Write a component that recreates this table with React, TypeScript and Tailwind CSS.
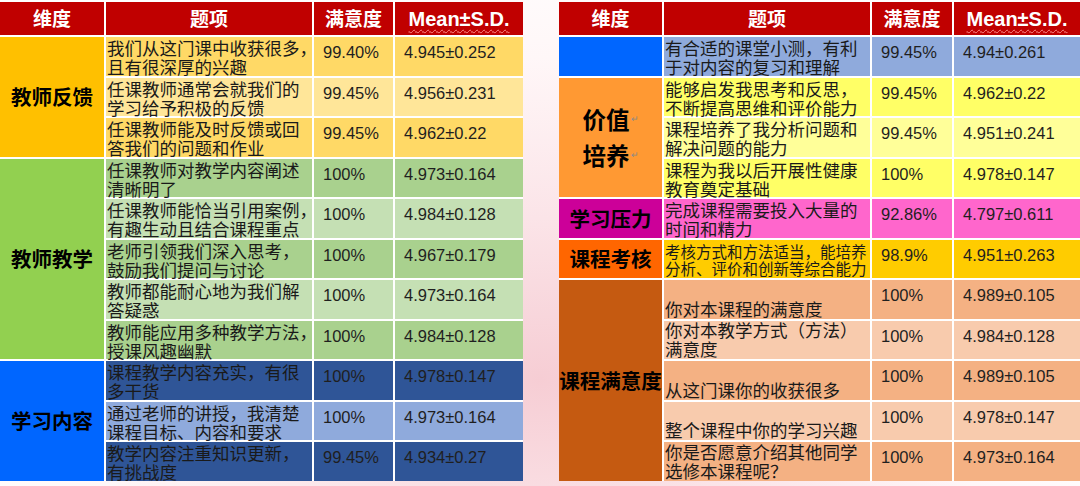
import type { ReactNode } from "react";

type Row = {
  lines: string[];
  pct: string;
  mean: string;
  bg: string;
  small?: boolean;
  bottom?: boolean;
};

type Group = {
  label: ReactNode;
  labelClass: string;
  rows: Row[];
};

const CJK = "font-['Noto_Sans_CJK_SC',sans-serif]";
const NUM = "font-['Liberation_Sans','Noto_Sans_CJK_SC',sans-serif]";

const leftGroups: Group[] = [
  {
    label: "教师反馈",
    labelClass: "row-span-3 bg-[#FFC000]",
    rows: [
      { lines: ["我们从这门课中收获很多，", "且有很深厚的兴趣"], pct: "99.40%", mean: "4.945±0.252", bg: "bg-[#FFD966]" },
      { lines: ["任课教师通常会就我们的", "学习给予积极的反馈"], pct: "99.45%", mean: "4.956±0.231", bg: "bg-[#FFE699]" },
      { lines: ["任课教师能及时反馈或回", "答我们的问题和作业"], pct: "99.45%", mean: "4.962±0.22", bg: "bg-[#FFD966]" },
    ],
  },
  {
    label: "教师教学",
    labelClass: "row-span-5 bg-[#92D050]",
    rows: [
      { lines: ["任课教师对教学内容阐述", "清晰明了"], pct: "100%", mean: "4.973±0.164", bg: "bg-[#A9D18E]" },
      { lines: ["任课教师能恰当引用案例，", "有趣生动且结合课程重点"], pct: "100%", mean: "4.984±0.128", bg: "bg-[#C5E0B4]" },
      { lines: ["老师引领我们深入思考，", "鼓励我们提问与讨论"], pct: "100%", mean: "4.967±0.179", bg: "bg-[#A9D18E]" },
      { lines: ["教师都能耐心地为我们解", "答疑惑"], pct: "100%", mean: "4.973±0.164", bg: "bg-[#C5E0B4]" },
      { lines: ["教师能应用多种教学方法，", "授课风趣幽默"], pct: "100%", mean: "4.984±0.128", bg: "bg-[#A9D18E]" },
    ],
  },
  {
    label: "学习内容",
    labelClass: "row-span-3 bg-[#0066FF]",
    rows: [
      { lines: ["课程教学内容充实，有很", "多干货"], pct: "100%", mean: "4.978±0.147", bg: "bg-[#2F5597]" },
      { lines: ["通过老师的讲授，我清楚", "课程目标、内容和要求"], pct: "100%", mean: "4.973±0.164", bg: "bg-[#8FAADC]" },
      { lines: ["教学内容注重知识更新，", "有挑战度"], pct: "99.45%", mean: "4.934±0.27", bg: "bg-[#2F5597]" },
    ],
  },
];

const mark = <span className="ml-[1px] align-bottom text-[9px] font-normal text-[#8a8a8a]">↵</span>;

const rightGroups: Group[] = [
  {
    label: "",
    labelClass: "row-span-1 bg-[#0066FF]",
    rows: [
      { lines: ["有合适的课堂小测，有利", "于对内容的复习和理解"], pct: "99.45%", mean: "4.94±0.261", bg: "bg-[#8FAADC]" },
    ],
  },
  {
    label: (
      <div className="flex flex-col items-center text-[23.5px] leading-[36px]">
        <span>价值{mark}</span>
        <span>培养{mark}</span>
      </div>
    ),
    labelClass: "row-span-3 bg-[#FF9933]",
    rows: [
      { lines: ["能够启发我思考和反思，", "不断提高思维和评价能力"], pct: "99.45%", mean: "4.962±0.22", bg: "bg-[#FFFF66]" },
      { lines: ["课程培养了我分析问题和", "解决问题的能力"], pct: "99.45%", mean: "4.951±0.241", bg: "bg-[#FFFF99]" },
      { lines: ["课程为我以后开展性健康", "教育奠定基础"], pct: "100%", mean: "4.978±0.147", bg: "bg-[#FFFF66]" },
    ],
  },
  {
    label: "学习压力",
    labelClass: "row-span-1 bg-[#CC0099]",
    rows: [
      { lines: ["完成课程需要投入大量的", "时间和精力"], pct: "92.86%", mean: "4.797±0.611", bg: "bg-[#FF66CC]" },
    ],
  },
  {
    label: "课程考核",
    labelClass: "row-span-1 bg-[#FF6600]",
    rows: [
      { lines: ["考核方式和方法适当，能培养", "分析、评价和创新等综合能力"], pct: "98.9%", mean: "4.951±0.263", bg: "bg-[#FFCC00]", small: true },
    ],
  },
  {
    label: <span className="whitespace-nowrap text-[20.5px]">课程满意度</span>,
    labelClass: "row-span-5 bg-[#C55A11]",
    rows: [
      { lines: ["你对本课程的满意度"], pct: "100%", mean: "4.989±0.105", bg: "bg-[#F4B183]", bottom: true },
      { lines: ["你对本教学方式（方法）", "满意度"], pct: "100%", mean: "4.984±0.128", bg: "bg-[#F8CBAD]", bottom: true },
      { lines: ["从这门课你的收获很多"], pct: "100%", mean: "4.989±0.105", bg: "bg-[#F4B183]", bottom: true },
      { lines: ["整个课程中你的学习兴趣"], pct: "100%", mean: "4.978±0.147", bg: "bg-[#F8CBAD]", bottom: true },
      { lines: ["你是否愿意介绍其他同学", "选修本课程呢？"], pct: "100%", mean: "4.973±0.164", bg: "bg-[#F4B183]", bottom: true },
    ],
  },
];

function HeaderRow() {
  const cell = "flex items-center justify-center bg-[#C00000] text-white font-bold";
  return (
    <>
      <div className={`${cell} ${CJK} text-[19px]`}>维度</div>
      <div className={`${cell} ${CJK} text-[19px]`}>题项</div>
      <div className={`${cell} ${CJK} text-[19px]`}>满意度</div>
      <div className={`${cell} ${NUM} text-[20px]`}>
        <span className="underline decoration-wavy decoration-[#ff8c8c] decoration-1 underline-offset-[3px]">
          Mean±S.D.
        </span>
      </div>
    </>
  );
}

function GroupRows({ group }: { group: Group }) {
  return (
    <>
      <div
        className={`col-start-1 flex items-center justify-center font-bold text-[20.5px] text-black ${CJK} ${group.labelClass}`}
      >
        {group.label}
      </div>
      {group.rows.map((r, i) => (
        <RowCells key={i} row={r} />
      ))}
    </>
  );
}

function RowCells({ row }: { row: Row }) {
  const itemText = row.small
    ? "justify-center pt-[3px] text-[15.5px] leading-[17px]"
    : row.bottom
    ? "justify-end pb-[1px] text-[17.5px] leading-[19px]"
    : "justify-start pt-[1px] text-[17.5px] leading-[19px]";
  return (
    <>
      <div className={`col-start-2 flex flex-col pl-[1px] text-[#1a1a1a] ${CJK} ${itemText} ${row.bg}`}>
        {row.lines.map((l) => (
          <span key={l} className="whitespace-nowrap">
            {l}
          </span>
        ))}
      </div>
      <div className={`pl-[9px] pt-[5px] text-[16.5px] leading-[20px] text-[#1f1f1f] ${NUM} ${row.bg}`}>
        {row.pct}
      </div>
      <div className={`pl-[9px] pt-[5px] text-[16.5px] leading-[20px] text-[#1f1f1f] ${NUM} ${row.bg}`}>
        {row.mean}
      </div>
    </>
  );
}

function SurveyTable({ groups, cols }: { groups: Group[]; cols: string }) {
  return (
    <div className={`grid grid-rows-[33px_repeat(11,38.5px)] gap-[2px] bg-white ${cols}`}>
      <HeaderRow />
      {groups.map((g, i) => (
        <GroupRows key={i} group={g} />
      ))}
    </div>
  );
}

export default function App() {
  return (
    <div className="h-[486px] w-[1080px] overflow-hidden bg-[radial-gradient(ellipse_at_50%_78%,#f6cdd4_0%,#fbe4e8_30%,#fff7f8_60%,#ffffff_85%)]">
      <div className="flex gap-[36px] pt-[2px]">
        <SurveyTable groups={leftGroups} cols="grid-cols-[104px_206px_79px_128px]" />
        <SurveyTable groups={rightGroups} cols="grid-cols-[103px_206px_80px_126px]" />
      </div>
    </div>
  );
}
